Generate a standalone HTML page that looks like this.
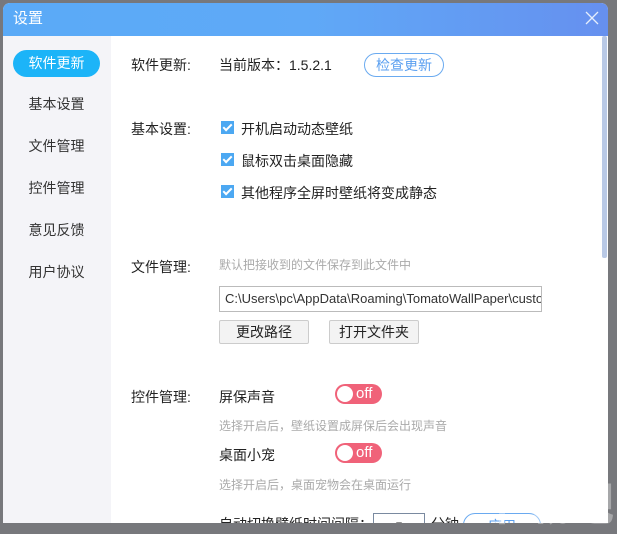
<!DOCTYPE html><html><head><meta charset="utf-8"><style>
body{margin:0;width:617px;height:534px;background:#77787c;position:relative;overflow:hidden;font-family:"Liberation Sans","Microsoft YaHei","Noto Sans CJK SC",sans-serif;font-size:14px;color:#222}
.win{position:absolute;left:3px;top:3px;width:605px;height:520px;background:#fff;border-radius:7px 7px 0 0;overflow:hidden}
.title{height:33px;background:linear-gradient(90deg,#5aaaf7,#5fa9f7 50%,#6690ef);color:#fff;font-size:15px;line-height:31px;padding-left:10px}
.x{position:absolute;right:8px;top:5px;width:16px;height:20px}
.side{position:absolute;left:0;top:33px;width:108px;height:487px;background:#f4f4f8}
.side div{position:absolute;left:10px;width:87px;height:27px;line-height:27px;text-align:center;font-size:14px;color:#333}
.side .on{background:#1cb4f8;color:#fff;border-radius:14px}
.a{position:absolute;white-space:nowrap}
.g{color:#aaa;font-size:12px}
.cb{position:absolute;width:13px;height:13px;background:#4ca8f2}
.cb:after{content:"";position:absolute;left:4px;top:1px;width:3px;height:7px;border:solid #fff;border-width:0 2px 2px 0;transform:rotate(45deg)}
.btn{position:absolute;height:22px;line-height:22px;border:1px solid #ccc;background:#f3f3f3;border-radius:2px;text-align:center;font-size:14px}
.tg{position:absolute;width:47px;height:20px;border-radius:10px;background:#f06279;color:#fff;font-size:15px;line-height:19px}
.tg:before{content:"";position:absolute;left:2px;top:2px;width:16px;height:16px;border-radius:50%;background:#fff}
.tg span{position:absolute;left:21px}
</style></head><body>
<div class="win">
<div class="title">设置</div>
<svg class="x" viewBox="0 0 16 20"><path d="M2 4L14 16M14 4L2 16" stroke="#e5eefc" stroke-width="1.3"/></svg>
<div class="side">
<div class="on" style="top:14px">软件更新</div>
<div style="top:55px">基本设置</div>
<div style="top:97px">文件管理</div>
<div style="top:139px">控件管理</div>
<div style="top:181px">意见反馈</div>
<div style="top:223px">用户协议</div>
</div>
<div style="position:absolute;left:599px;top:33px;width:5px;height:222px;background:#b9c9e6;border-radius:2px"></div>
<div class="a" style="left:128px;top:52px">软件更新:</div>
<div class="a" style="left:216px;top:52px">当前版本：1.5.2.1</div>
<div class="a" style="left:361px;top:50px;width:78px;height:22px;border:1px solid #6aaaf0;border-radius:12px;color:#5a9ff0;text-align:center;line-height:22px">检查更新</div>
<div class="a" style="left:128px;top:116px">基本设置:</div>
<div class="cb" style="left:218px;top:118px"></div><div class="a" style="left:238px;top:116px">开机启动动态壁纸</div>
<div class="cb" style="left:218px;top:150px"></div><div class="a" style="left:238px;top:148px">鼠标双击桌面隐藏</div>
<div class="cb" style="left:218px;top:182px"></div><div class="a" style="left:238px;top:180px">其他程序全屏时壁纸将变成静态</div>
<div class="a" style="left:128px;top:254px">文件管理:</div>
<div class="a g" style="left:216px;top:253px">默认把接收到的文件保存到此文件中</div>
<div class="a" style="left:216px;top:283px;overflow:hidden;border:1px solid #bbb;line-height:24px;padding-left:5px;box-sizing:border-box;width:323px;height:26px;font-size:13px;color:#333">C:\Users\pc\AppData\Roaming\TomatoWallPaper\custom</div>
<div class="btn" style="left:216px;top:317px;width:88px">更改路径</div>
<div class="btn" style="left:326px;top:317px;width:88px">打开文件夹</div>
<div class="a" style="left:128px;top:384px">控件管理:</div>
<div class="a" style="left:216px;top:384px">屏保声音</div>
<div class="tg" style="left:332px;top:381px"><span>off</span></div>
<div class="a g" style="left:216px;top:414px">选择开启后，壁纸设置成屏保后会出现声音</div>
<div class="a" style="left:216px;top:442px">桌面小宠</div>
<div class="tg" style="left:332px;top:440px"><span>off</span></div>
<div class="a g" style="left:216px;top:473px">选择开启后，桌面宠物会在桌面运行</div>
<div class="a" style="left:216px;top:511px">自动切换壁纸时间间隔：</div>
<div class="a" style="left:370px;top:510px;width:50px;height:26px;border:1px solid #7a8aa0;text-align:center;line-height:26px">5</div>
<div class="a" style="left:428px;top:511px">分钟</div>
<div class="a" style="left:460px;top:510px;width:76px;height:24px;border:1px solid #6aaaf0;border-radius:12px;color:#5a9ff0;text-align:center;line-height:24px">应用</div>
</div>
<div class="a" style="left:480px;top:468px;font-size:46px;color:rgba(255,255,255,.35);font-weight:bold;letter-spacing:-2px">下载吧</div>
</body></html>
